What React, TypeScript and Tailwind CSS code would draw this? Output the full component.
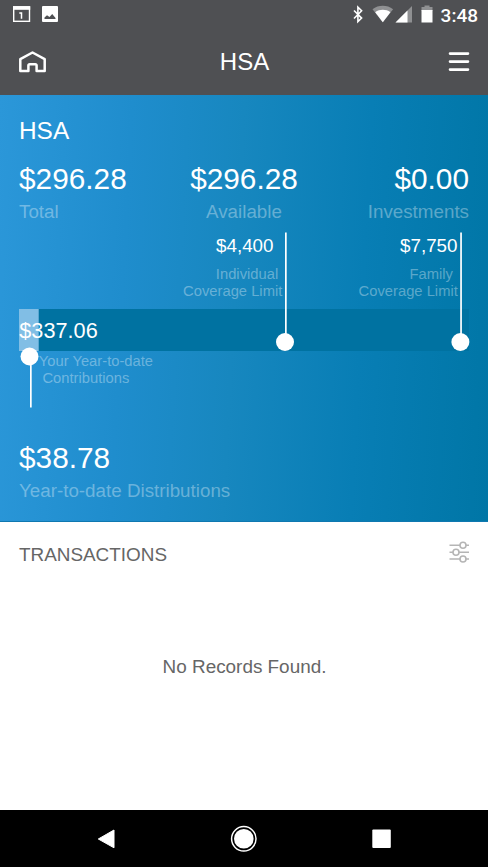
import type { ReactNode } from "react";

function StatusBar() {
  return (
    <div className="flex h-[29px] items-center justify-between pl-[13px] pr-[10px]">
      <svg width="46" height="29" viewBox="0 0 46 29">
        <rect x="0.7" y="6.9" width="15.8" height="14.4" fill="none" stroke="#fff" strokeWidth="1.4" />
        <rect x="0" y="6.2" width="17.2" height="3.6" fill="#fff" />
        <path d="M6.300 13h2.200v5.800" fill="none" stroke="#fff" strokeWidth="1.5" />
        <rect x="29" y="6" width="16" height="16" rx="1" fill="#fff" />
        <path d="M31.500 19V17.500l2.500-2.300 2.500 1.800 2.700-3 3.300 4V19z" fill="#4f5053" />
      </svg>
      <div className="flex items-center">
        <svg width="85" height="29" viewBox="0 0 85 29">
          <path
            d="M2 10.500l7.600 7.600-3.700 3.500V7.200l3.700 3.500L2 18.500"
            fill="none"
            stroke="#fff"
            strokeWidth="1.6"
          />
          <path d="M20.500 9.200C26.500 4.600 35.100 4.600 41.100 9.200L30.800 22.300z" fill="#8f9092" />
          <path d="M23.200 12.200C27.700 9 34 9 38.400 12.200L30.800 22.300z" fill="#fff" />
          <path d="M60 6v16.500H43.500z" fill="#8f9092" />
          <path d="M55.500 10.500v12h-12z" fill="#fff" />
          <path d="M72.500 5.500h5v1.500h3v4h-11V7h3z" fill="#8f9092" />
          <rect x="69.500" y="10" width="11" height="12.500" fill="#fff" />
        </svg>
        <span className="ml-1 mt-px font-[Roboto,sans-serif] text-[19px] font-medium leading-[29px]">3:48</span>
      </div>
    </div>
  );
}

function Header() {
  return (
    <div className="grid h-[66px] grid-cols-3 items-center pl-[19px] pr-[18px]">
      <svg width="27" height="22" viewBox="0 0 27 22" className="mb-[1px]">
        <path
          d="M1.300 8.200L13.500 1.500L25.700 8.200V20H17.600V14.600Q17.600 13.200 16.200 13.200H10.800Q9.400 13.200 9.400 14.600V20H1.300Z"
          fill="none"
          stroke="#fff"
          strokeWidth="2.500"
          strokeLinejoin="round"
        />
      </svg>
      <h1 className="text-center text-[24px] leading-7">HSA</h1>
      <svg width="22" height="20" viewBox="0 0 22 20" className="justify-self-end">
        <path d="M2 1.600h18M2 9.600h18M2 17.600h18" stroke="#fff" strokeWidth="2.600" strokeLinecap="round" />
      </svg>
    </div>
  );
}

interface AmountProps {
  value: string;
  label: string;
  className?: string;
}

function Amount({ value, label, className }: AmountProps) {
  return (
    <div className={className}>
      <div className="text-[29.8px] leading-9">{value}</div>
      <div className="mt-[3px] text-[18.8px] leading-6 text-white/35">{label}</div>
    </div>
  );
}

// Year-to-date contributions against the yearly limits
function ContributionChart() {
  return (
    <svg width="450" height="176" viewBox="0 0 450 176" className="mt-2 block overflow-visible">
      <rect x="0" y="77" width="450" height="42" fill="#0072a1" />
      <rect x="0" y="77" width="19.700" height="42" fill="#81bee5" />

      <g fill="#fff">
        <rect x="266" y="0.500" width="1.700" height="110" />
        <circle cx="266" cy="110" r="9" />
        <rect x="441.200" y="0.500" width="1.700" height="110" />
        <circle cx="441.400" cy="110" r="9" />
        <rect x="11" y="125" width="1.700" height="50.500" />
        <circle cx="10.500" cy="124.500" r="9" />
      </g>

      <g fill="#fff" fontSize="18.800">
        <text x="254.500" y="20" textAnchor="end">$4,400</text>
        <text x="438.500" y="20" textAnchor="end">$7,750</text>
        <text x="0.300" y="106" fontSize="21.700">$337.06</text>
      </g>

      <g fill="#fff" fillOpacity="0.35" fontSize="14.750">
        <text x="259.200" y="47" textAnchor="end">Individual</text>
        <text x="263.300" y="64" textAnchor="end">Coverage Limit</text>
        <text x="434" y="47" textAnchor="end">Family</text>
        <text x="438.800" y="64" textAnchor="end">Coverage Limit</text>
        <text x="19.800" y="134">Your Year-to-date</text>
        <text x="23.400" y="151">Contributions</text>
      </g>
    </svg>
  );
}

function AccountCard() {
  return (
    <section className="h-[427px] border-b border-[#0f78b0] bg-[linear-gradient(93deg,#2b97d9_0%,#1f8dcd_26%,#1787bf_48%,#087eb5_73%,#0076a6_100%)] px-[19px] pt-[22px] text-white">
      <h2 className="text-[24.4px] leading-7">HSA</h2>
      <div className="mt-4 grid grid-cols-3">
        <Amount value="$296.28" label="Total" />
        <Amount value="$296.28" label="Available" className="text-center" />
        <Amount value="$0.00" label="Investments" className="text-right" />
      </div>
      <ContributionChart />
      <Amount value="$38.78" label="Year-to-date Distributions" className="mt-8" />
    </section>
  );
}

function Transactions() {
  return (
    <section className="h-[288px] bg-white pl-[19px] pr-[18px] pt-[21px] text-[18.9px] leading-6 text-[#666]">
      <div className="flex items-start justify-between">
        <h3>TRANSACTIONS</h3>
        <svg width="21" height="22" viewBox="0 0 21 22" fill="none" stroke="#b5b5b5" strokeWidth="1.600" className="-mt-0.5">
          <path d="M0.500 4.300H11M17 4.300h3M0.500 11.200H4M10 11.200h10M0.500 18H11M17 18h3" />
          <circle cx="14" cy="4.300" r="3" />
          <circle cx="7" cy="11.200" r="3" />
          <circle cx="14" cy="18" r="3" />
        </svg>
      </div>
      <p className="mt-[88px] text-center">No Records Found.</p>
    </section>
  );
}

function NavButton({ children }: { children: ReactNode }) {
  return (
    <button type="button" className="flex w-[137px] items-center justify-center">
      {children}
    </button>
  );
}

function NavigationBar() {
  return (
    <nav className="flex h-[57px] justify-center bg-black">
      <NavButton>
        <svg width="28" height="28" viewBox="0 0 28 28">
          <path d="M5.300 14L21 5V22.800Z" fill="#fff" stroke="#fff" strokeWidth="1" strokeLinejoin="round" />
        </svg>
      </NavButton>
      <NavButton>
        <svg width="28" height="28" viewBox="0 0 28 28">
          <circle cx="13.800" cy="13.800" r="12.200" fill="none" stroke="#fff" strokeWidth="1.500" />
          <circle cx="13.800" cy="13.800" r="9.800" fill="#fff" />
        </svg>
      </NavButton>
      <NavButton>
        <svg width="28" height="28" viewBox="0 0 28 28">
          <rect x="5.300" y="4.500" width="18.500" height="18.500" rx="1" fill="#fff" />
        </svg>
      </NavButton>
    </nav>
  );
}

export default function App() {
  return (
    <main className="h-[867px] w-[488px] overflow-hidden bg-white font-['Liberation_Sans',Arial,sans-serif]">
      <header className="h-[95px] bg-[#4f5053] text-white">
        <StatusBar />
        <Header />
      </header>
      <AccountCard />
      <Transactions />
      <NavigationBar />
    </main>
  );
}
